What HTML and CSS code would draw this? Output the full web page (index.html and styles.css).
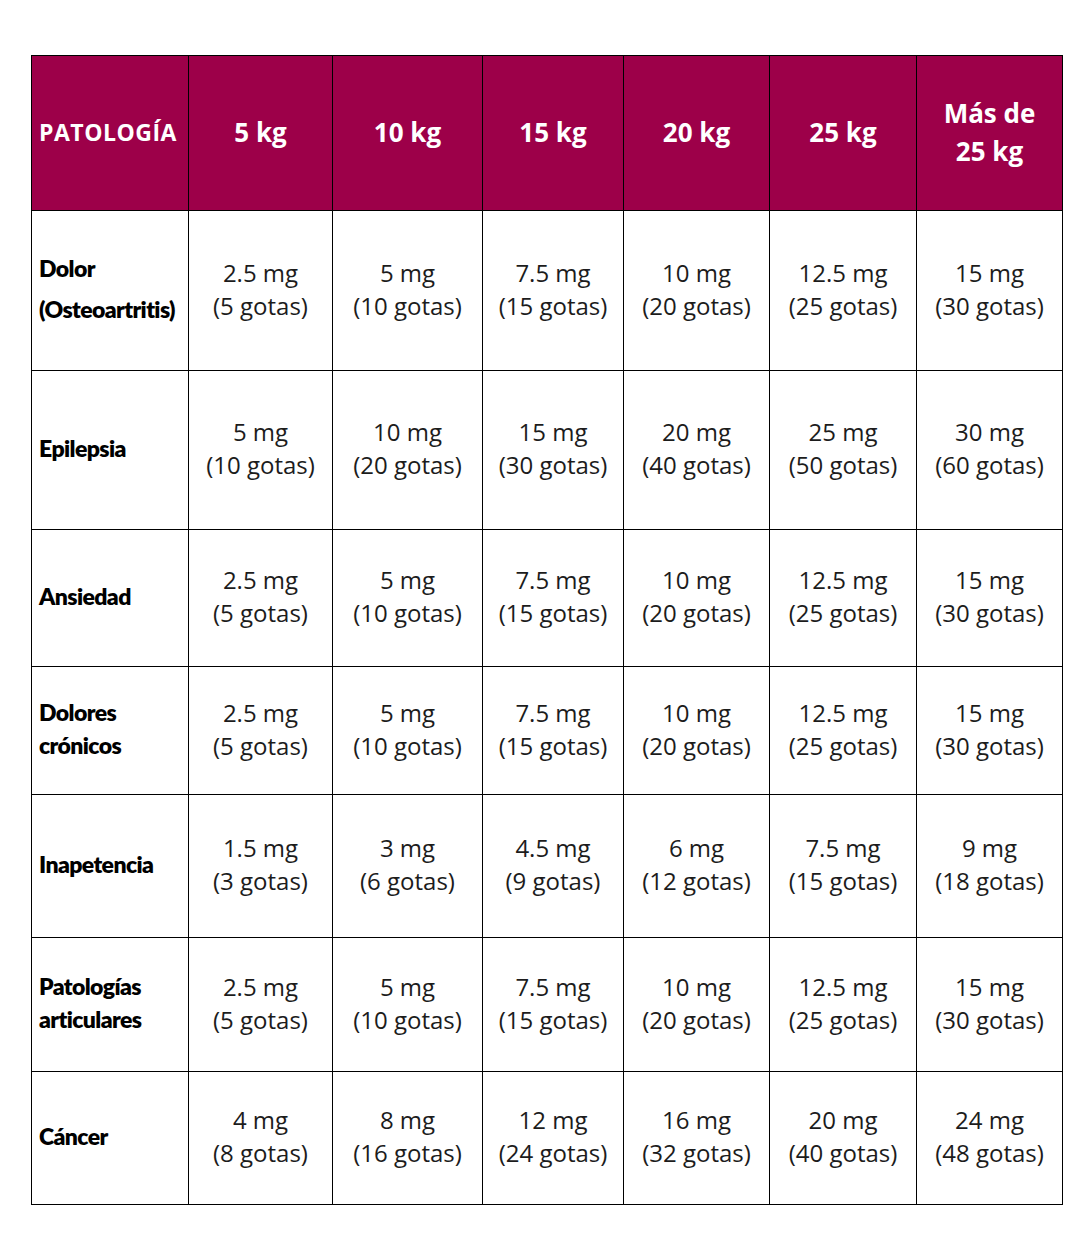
FILE: index.html
```html
<!DOCTYPE html>
<html lang="es">
<head>
<meta charset="utf-8">
<title>Dosificación</title>
<link rel="stylesheet" href="styles.css">
</head>
<body>
<table class="dose">
  <colgroup>
    <col class="c-lab"><col class="c1"><col class="c2"><col class="c3"><col class="c4"><col class="c5"><col class="c6">
  </colgroup>
  <thead>
    <tr class="r-head">
      <th class="lab-head">PATOLOGÍA</th>
      <th>5 kg</th>
      <th>10 kg</th>
      <th>15 kg</th>
      <th>20 kg</th>
      <th>25 kg</th>
      <th>Más de<br>25 kg</th>
    </tr>
  </thead>
  <tbody>
    <tr class="r1">
      <td class="lab lab-dolor">Dolor<br>(Osteoartritis)</td>
      <td>2.5 mg<br>(5 gotas)</td>
      <td>5 mg<br>(10 gotas)</td>
      <td>7.5 mg<br>(15 gotas)</td>
      <td>10 mg<br>(20 gotas)</td>
      <td>12.5 mg<br>(25 gotas)</td>
      <td>15 mg<br>(30 gotas)</td>
    </tr>
    <tr class="r2">
      <td class="lab">Epilepsia</td>
      <td>5 mg<br>(10 gotas)</td>
      <td>10 mg<br>(20 gotas)</td>
      <td>15 mg<br>(30 gotas)</td>
      <td>20 mg<br>(40 gotas)</td>
      <td>25 mg<br>(50 gotas)</td>
      <td>30 mg<br>(60 gotas)</td>
    </tr>
    <tr class="r3">
      <td class="lab">Ansiedad</td>
      <td>2.5 mg<br>(5 gotas)</td>
      <td>5 mg<br>(10 gotas)</td>
      <td>7.5 mg<br>(15 gotas)</td>
      <td>10 mg<br>(20 gotas)</td>
      <td>12.5 mg<br>(25 gotas)</td>
      <td>15 mg<br>(30 gotas)</td>
    </tr>
    <tr class="r4">
      <td class="lab">Dolores<br>crónicos</td>
      <td>2.5 mg<br>(5 gotas)</td>
      <td>5 mg<br>(10 gotas)</td>
      <td>7.5 mg<br>(15 gotas)</td>
      <td>10 mg<br>(20 gotas)</td>
      <td>12.5 mg<br>(25 gotas)</td>
      <td>15 mg<br>(30 gotas)</td>
    </tr>
    <tr class="r5">
      <td class="lab">Inapetencia</td>
      <td>1.5 mg<br>(3 gotas)</td>
      <td>3 mg<br>(6 gotas)</td>
      <td>4.5 mg<br>(9 gotas)</td>
      <td>6 mg<br>(12 gotas)</td>
      <td>7.5 mg<br>(15 gotas)</td>
      <td>9 mg<br>(18 gotas)</td>
    </tr>
    <tr class="r6">
      <td class="lab">Patologías<br>articulares</td>
      <td>2.5 mg<br>(5 gotas)</td>
      <td>5 mg<br>(10 gotas)</td>
      <td>7.5 mg<br>(15 gotas)</td>
      <td>10 mg<br>(20 gotas)</td>
      <td>12.5 mg<br>(25 gotas)</td>
      <td>15 mg<br>(30 gotas)</td>
    </tr>
    <tr class="r7">
      <td class="lab">Cáncer</td>
      <td>4 mg<br>(8 gotas)</td>
      <td>8 mg<br>(16 gotas)</td>
      <td>12 mg<br>(24 gotas)</td>
      <td>16 mg<br>(32 gotas)</td>
      <td>20 mg<br>(40 gotas)</td>
      <td>24 mg<br>(48 gotas)</td>
    </tr>
  </tbody>
</table>
</body>
</html>
```
FILE: styles.css
```css
html, body {
  margin: 0;
  padding: 0;
  background: #ffffff;
}
body {
  padding: 55px 0 0 31px;
  font-family: "Open Sans", "Noto Sans", sans-serif;
  color: #1c1c1c;
}
.dose {
  width: 1031px;
  border-collapse: collapse;
  table-layout: fixed;
}
.c-lab { width: 157px; }
.c1 { width: 144px; }
.c2 { width: 150px; }
.c3 { width: 141px; }
.c4 { width: 146px; }
.c5 { width: 147px; }
.c6 { width: 146px; }

.dose th,
.dose td {
  border: 1px solid #000;
  text-align: center;
  vertical-align: middle;
  padding: 0 4px;
}
.dose th {
  background: #9d0049;
  color: #ffffff;
  font-weight: 700;
  font-size: 26px;
  line-height: 38px;
  padding-bottom: 2px;
}
.dose th.lab-head {
  text-align: left;
  font-size: 23px;
  letter-spacing: 0.5px;
  padding-left: 7px;
  padding-right: 0;
}
.dose td {
  font-size: 24px;
  line-height: 33px;
  font-weight: 400;
  padding-bottom: 4px;
}
.dose td.lab {
  text-align: left;
  font-family: "Lato", "Noto Sans", sans-serif;
  font-weight: 800;
  font-size: 23px;
  letter-spacing: -0.6px;
  color: #000;
  padding-left: 7px;
  padding-right: 0;
  padding-bottom: 4px;
}
.dose td.lab-dolor {
  line-height: 41px;
}
.r-head { height: 155px; }
.r1 { height: 160px; }
.r2 { height: 159px; }
.r3 { height: 137px; }
.r4 { height: 128px; }
.r5 { height: 143px; }
.r6 { height: 134px; }
.r7 { height: 133px; }
```
